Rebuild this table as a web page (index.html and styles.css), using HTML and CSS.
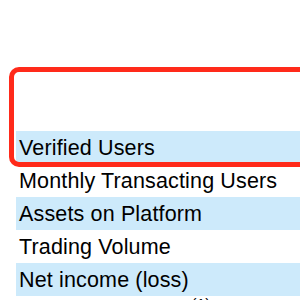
FILE: index.html
```html
<!DOCTYPE html>
<html>
<head>
<meta charset="utf-8">
<link rel="stylesheet" href="styles.css">
</head>
<body>
<div class="page">
  <div class="rows">
    <div class="row"></div>
    <div class="row"></div>
    <div class="row alt">Verified Users</div>
    <div class="row">Monthly Transacting Users</div>
    <div class="row alt">Assets on Platform</div>
    <div class="row">Trading Volume</div>
    <div class="row alt">Net income (loss)</div>
    <div class="row last">Adjusted EBITDA<sup class="note">(1)</sup></div>
  </div>
  <div class="highlight"></div>
</div>
</body>
</html>
```
FILE: styles.css
```css
html, body {
  margin: 0;
  padding: 0;
  background: #ffffff;
  overflow: hidden;
}
.page {
  position: relative;
  width: 300px;
  height: 300px;
  overflow: hidden;
  font-family: "Liberation Sans", Arial, sans-serif;
  color: #000;
}
.rows {
  padding-top: 65px;
  padding-left: 16px;
}
.row {
  height: 33px;
  line-height: 34px;
  font-size: 21.5px;
  letter-spacing: 0.15px;
  padding-left: 3px;
  white-space: nowrap;
}
.row.alt {
  background: #cdeafb;
}
.row.last {
  padding-top: 4px;
}
.note {
  font-size: 15px;
  vertical-align: 15px;
  line-height: 0;
  margin-left: 3px;
}
.highlight {
  position: absolute;
  left: 9px;
  top: 67px;
  width: 310px;
  height: 90px;
  border: 5px solid #ff2a1a;
  border-radius: 10px;
}
```
